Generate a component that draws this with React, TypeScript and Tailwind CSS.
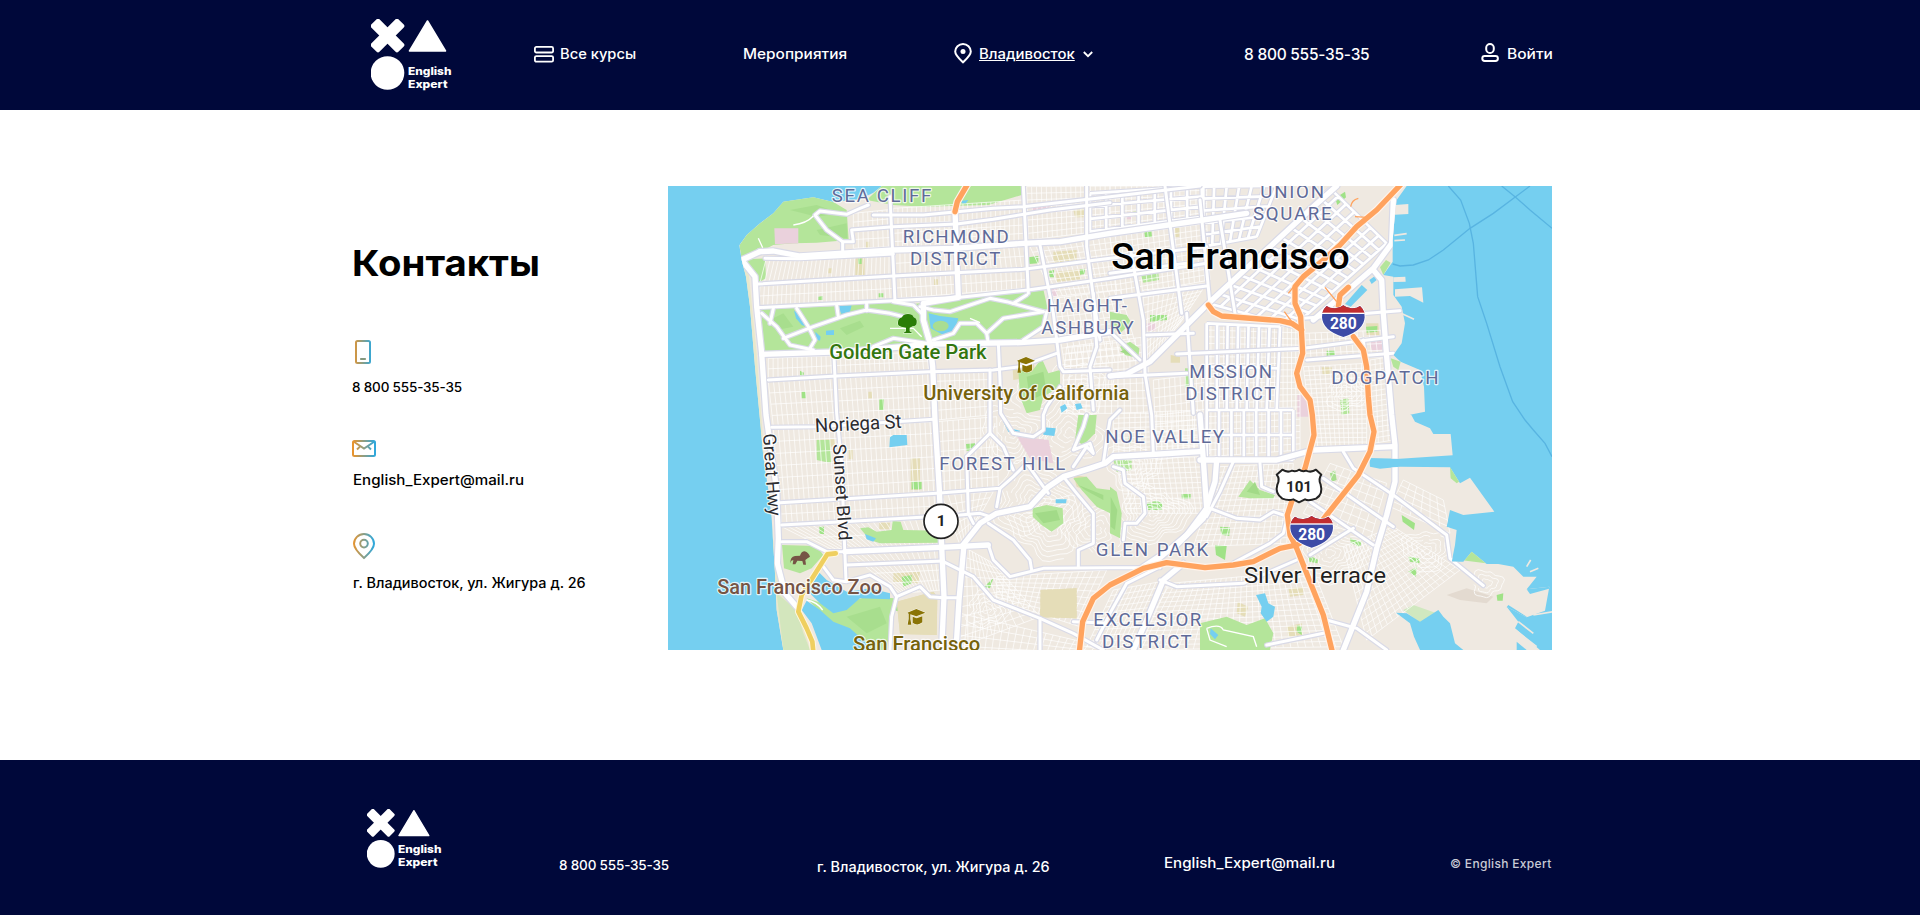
import React from "react";

type Pt = [number, number];

const parse = (s: string): Pt[] =>
  s.trim().split(/\s+/).map((p) => p.split(",").map(Number) as Pt);

/** Fine street mesh stretched over a quadrilateral (clockwise corners). */
function mesh(quad: string, nu: number, nv: number) {
  const [a, b, c, d] = parse(quad);
  const mix = (p: Pt, q: Pt, t: number): Pt => [p[0] + (q[0] - p[0]) * t, p[1] + (q[1] - p[1]) * t];
  let out = "";
  for (let i = 0; i <= nu; i++) {
    const p = mix(a, b, i / nu);
    const q = mix(d, c, i / nu);
    out += `M${p[0].toFixed(1)} ${p[1].toFixed(1)}L${q[0].toFixed(1)} ${q[1].toFixed(1)}`;
  }
  for (let j = 0; j <= nv; j++) {
    const p = mix(a, d, j / nv);
    const q = mix(b, c, j / nv);
    out += `M${p[0].toFixed(1)} ${p[1].toFixed(1)}L${q[0].toFixed(1)} ${q[1].toFixed(1)}`;
  }
  return out;
}

/** Winding hill streets around a summit. */
function rings(cx: number, cy: number, r: number, n: number, seed: number) {
  let out = "";
  for (let k = 1; k <= n; k++) {
    const base = (r * k) / n;
    for (let t = 0; t <= 32; t++) {
      const a = (t / 32) * Math.PI * 1.85 + seed + k * 0.5;
      const rr = base * (1 + 0.16 * Math.sin(a * 3 + seed) + 0.09 * Math.sin(a * 7 + seed * 2));
      out += `${t ? "L" : "M"}${(cx + rr * Math.cos(a)).toFixed(1)} ${(cy + rr * 0.85 * Math.sin(a)).toFixed(1)}`;
    }
  }
  return out;
}

const LAND =
  "665,18 640,38 600,58 520,66 460,52 370,65 340,100 300,130 260,165 238,196 245,240 258,290 270,380 285,560 300,720 310,830 325,930 335,1015 345,1180 350,1290 370,1410 2640,1410 2565,1345 2575,1325 2540,1280 2600,1312 2655,1292 2668,1220 2600,1228 2630,1190 2590,1190 2560,1160 2515,1152 2480,1152 2435,1115 2410,1145 2375,1145 2385,1095 2390,1050 2360,1040 2370,990 2410,1005 2503,995 2430,893 2400,910 2370,862 2220,860 2160,866 2130,860 2128,834 2220,836 2378,826 2372,762 2320,762 2310,745 2265,725 2254,705 2250,704 2295,695 2292,620 2280,570 2222,545 2200,525 2225,490 2235,430 2225,380 2200,345 2200,290 2170,285 2198,245 2198,180 2205,100 2210,60 2240,18";

const PIERS =
  "2205,75 2245,72 2245,102 2205,104 Z 2200,292 2236,290 2237,305 2200,306 Z 2205,328 2286,322 2290,368 2250,348 2205,350 Z";

const HILL_PARKS = [
  "1075,570 1115,575 1145,535 1165,580 1200,570 1200,620 1150,650 1140,690 1100,700 1080,650",
  "600,1045 625,1042 650,1055 695,1050 698,1022 722,1025 730,1050 842,1052 840,1088 660,1090 630,1080",
  "1118,985 1160,975 1208,985 1210,1030 1175,1055 1145,1035 1118,1010",
  "1240,895 1280,890 1310,925 1350,930 1350,1000 1310,980 1265,930",
  "1350,395 1400,405 1415,430 1380,460 1350,440",
  "1380,500 1410,485 1438,505 1435,535 1395,525",
  "1350,920 1370,935 1385,1000 1380,1075 1350,1060",
  "1735,950 1770,900 1800,930 1845,945 1840,955 1770,955",
  "1620,1330 1700,1310 1760,1335 1815,1315 1840,1360 1830,1410 1620,1410",
  "1255,705 1310,705 1305,760 1270,795 1245,780",
];

const PARKS = [
  "338,100 372,62 460,50 520,66 560,90 566,180 470,188 400,190 340,195 300,215 245,235 238,196 262,162 300,130",
  "250,238 315,235 318,295 290,310 272,270",
  "665,18 1090,18 1085,45 985,75 790,80 700,75 620,60",
  "303,388 530,378 700,364 760,372 900,356 1150,328 1165,395 1150,440 1090,485 820,490 560,512 312,520",
  "366,1095 470,1098 490,1125 455,1165 420,1180 372,1165",
  "440,1255 520,1280 620,1250 705,1255 693,1410 630,1410 590,1370 510,1330",
  "2370,862 2395,865 2415,893 2390,910 2372,895",
  "2370,990 2400,1010 2425,1030 2490,1035 2420,1048 2380,1030",
  "2400,1140 2437,1112 2478,1150",
  "2170,285 2160,262 2178,240 2192,248",
  "2192,535 2222,545 2215,570 2200,560",
  "1440,280 1495,275 1497,300 1450,308",
  "470,780 510,780 515,850 470,840",
  "1575,565 1600,565 1602,620 1575,625",
  "2040,660 2065,655 2068,700 2045,705",
  "1360,840 1415,835 1415,870 1370,875",
];

const DARK_PARKS = [
  "540,445 600,422 612,440 560,465",
  "390,90 470,75 540,100 470,110",
  "470,150 560,130 562,175 480,165",
  "560,1310 660,1280 680,1330 620,1360",
  "330,420 370,400 400,440 350,450",
  "2010,880 2025,870 2030,900 2015,905",
];

const DARK_HILLS = [
  "1125,1000 1190,990 1200,1020 1150,1030",
  "1100,590 1150,575 1160,640 1110,660",
  "1255,915 1330,945 1330,960 1275,930",
  "1380,515 1410,500 1425,530",
  "1352,950 1372,990 1365,1050 1352,1040",
  "1760,935 1785,905 1800,945",
];

const WATERS = [
  "530,378 575,376 570,395 545,402",
  "402,392 425,405 440,440 425,435 408,415",
  "806,400 840,408 895,415 885,450 850,465 812,445",
  "498,452 522,450 522,465 498,465",
  "466,455 482,470 480,482 468,478",
  "905,62 925,60 918,70 905,70",
  "690,772 700,765 740,765 742,795 688,802",
  "615,1062 648,1075 640,1085 620,1078",
  "1150,742 1187,745 1183,768 1150,764",
  "1028,722 1050,745 1080,752 1075,765 1045,755",
  "1187,958 1220,958 1218,970 1187,970",
  "1200,680 1215,672 1222,685 1205,698",
  "1245,672 1262,670 1268,685 1250,690",
  "470,1170 500,1200 560,1235 630,1225 690,1240 690,1258 600,1255 560,1290 520,1300 480,1270 445,1235 455,1200",
  "440,1262 480,1290 520,1325 570,1345 620,1390 625,1410 485,1410 455,1330 425,1290",
  "1788,1245 1815,1240 1825,1270 1845,1280 1840,1310 1820,1325 1802,1300 1805,1280",
  "1652,1345 1675,1365 1665,1378 1650,1362",
  "2128,300 2145,288 2150,300 2135,312",
  "2208,1298 2240,1300 2280,1325 2335,1290 2350,1310 2370,1330 2385,1390 2410,1410 2280,1410 2262,1370 2250,1330",
  "2545,1275 2600,1310 2598,1316 2540,1282",
  "2570,1385 2600,1410 2570,1410",
  "2600,1228 2668,1215 2672,1225 2610,1242",
];

const TANS = [
  "586,232 614,232 614,285 586,285", "1180,215 1250,210 1250,240 1180,248", "1188,275 1262,268 1262,298 1190,305",
  "1058,565 1120,545 1130,590 1060,600", "710,1265 820,1235 832,1250 830,1365 720,1362", "700,1180 780,1175 775,1210 700,1205",
  "1142,1230 1250,1225 1250,1315 1140,1312", "1733,1265 1765,1280 1755,1310 1730,1300", "2118,430 2155,430 2158,465 2120,465",
  "752,835 780,835 780,930 752,930", "470,778 525,778 525,800 470,800", "1880,1340 1925,1330 1928,1365 1885,1370",
  "1985,562 2015,562 2018,580 1988,584", "1532,525 1560,530 1560,548 1532,548", "1240,885 1280,890 1275,930 1250,920",
  "618,185 628,185 628,205 618,205", "505,265 515,265 515,280 505,280", "822,298 834,298 834,315 822,315",
  "566,808 578,808 578,838 566,838", "625,635 636,635 636,655 625,655", "1240,90 1278,85 1270,112 1245,112",
  "1545,145 1560,142 1558,170 1545,172", "1885,1225 1930,1220 1930,1245 1890,1250", "658,1028 690,1028 688,1048 658,1048",
];

const GREENS = [
  "594,235 605,235 605,252 594,252", "475,350 488,348 488,360 475,360", "656,340 670,340 670,352 656,352", "420,572 432,578 430,588 420,585",
  "425,635 438,635 438,655 425,655", "658,658 672,658 672,690 658,690", "1105,232 1135,228 1135,250 1108,252", "1168,272 1182,270 1182,292 1168,292",
  "1260,268 1275,266 1275,282 1260,284", "478,1040 492,1040 492,1062 478,1062", "918,792 945,790 946,812 920,812", "755,905 785,905 785,928 755,928",
  "1452,150 1474,150 1476,172 1455,172", "1470,405 1520,405 1522,420 1470,425", "2000,512 2025,512 2025,525 2000,528", "1852,502 1876,502 1876,514 1852,516",
  "2118,440 2152,438 2152,455 2120,458", "1680,1040 1710,1042 1708,1068 1684,1064", "1665,1095 1700,1098 1695,1140 1668,1125", "1565,942 1592,942 1592,956 1565,956",
  "2225,1005 2265,1030 2262,1050 2228,1025", "2070,1075 2105,1085 2100,1100 2072,1088", "2245,1130 2280,1135 2278,1150 2250,1145", "2245,1175 2270,1160 2268,1190",
  "2510,1245 2530,1240 2528,1262 2512,1262", "1460,970 1490,962 1508,970 1505,990 1465,990", "700,1275 740,1290 738,1300 700,1290", "725,1190 755,1185 755,1210 730,1220",
  "1912,1335 1926,1340 1925,1365 1910,1355", "1945,1125 1975,1140 1972,1150 1948,1145", "972,1220 1000,1195 990,1225", "1405,770 1412,770 1412,790 1405,790",
  "2025,55 2055,35 2058,52 2032,75", "1420,95 1438,95 1438,105 1420,105",
];

const PINKS = [
  "343,145 415,145 415,190 345,193", "1072,770 1165,780 1180,850 1110,835", "2130,482 2170,482 2172,510 2135,512", "1912,645 1945,645 1945,710 1912,710",
  "1170,320 1190,320 1190,350 1170,350", "1460,430 1488,430 1488,452 1460,452", "1400,98 1414,98 1414,118 1400,118", "1115,80 1170,76 1165,90 1115,95",
];

const FINE = [
  mesh("700,85 1090,60 1090,185 700,210", 28, 5),
  mesh("580,100 695,88 700,200 580,205", 8, 4),
  mesh("318,238 700,218 700,285 300,308", 30, 1),
  mesh("300,318 700,293 704,357 296,378", 30, 2),
  mesh("705,215 1090,195 1100,262 705,285", 26, 2),
  mesh("705,293 1098,273 1100,325 710,355", 26, 2),
  mesh("325,535 815,515 820,570 325,598", 34, 2),
  mesh("325,605 818,580 825,718 340,740", 32, 4),
  mesh("340,748 825,725 836,935 358,965", 32, 6),
  mesh("360,972 838,945 842,1010 365,1032", 30, 2),
  mesh("365,1040 840,1015 845,1095 500,1108", 26, 2),
  mesh("825,575 985,572 990,705 830,720", 11, 5),
  mesh("830,725 1010,710 1015,920 838,935", 11, 7),
  mesh("845,945 1000,935 950,1025 900,1095", 8, 5),
  mesh("565,1120 840,1110 845,1230 720,1240", 16, 4),
  mesh("1100,20 1350,18 1350,150 1105,180", 17, 8),
  mesh("1110,200 1350,170 1370,330 1180,350", 14, 9),
  mesh("1180,355 1380,330 1440,540 1215,560", 12, 11),
  mesh("1350,18 1640,18 1640,110 1350,155", 18, 7),
  mesh("1350,170 1640,130 1650,300 1370,350", 18, 10),
  mesh("1450,330 1640,310 1560,430 1450,560", 12, 10),
  mesh("1220,500 1460,470 1470,700 1200,700", 14, 10),
  mesh("1480,600 1640,580 1650,820 1490,840", 10, 9),
  mesh("1360,700 1620,690 1620,810 1360,820", 16, 8),
  mesh("1370,840 1620,830 1640,1000 1400,1000", 15, 11),
  mesh("1640,430 1920,440 1920,810 1640,830", 22, 20),
  mesh("1930,560 2120,550 2120,800 1960,800", 12, 18),
  mesh("2130,540 2190,530 2200,780 2140,790", 4, 16),
  mesh("1930,460 2180,450 2190,530 1935,540", 14, 4),
  mesh("1680,860 1900,850 1880,1090 1600,1100", 15, 14),
  mesh("1530,1210 1960,1170 2050,1400 1420,1410", 28, 14),
  mesh("910,1100 1000,1150 1140,1310 900,1400", 10, 10),
  mesh("900,1300 1330,1400 1300,1430 890,1430", 20, 4),
  mesh("1010,1190 1340,1170 1260,1340 1010,1260", 16, 8),
  mesh("1360,1230 1530,1200 1440,1400 1280,1400", 12, 10),
  mesh("2050,1100 2200,1040 2400,1170 2120,1380", 18, 14),
  mesh("2010,850 2180,910 2130,1080 1930,1000", 8, 7),
  mesh("2230,900 2350,960 2370,1060 2190,980", 6, 5),
];

const HILLS = [
  [1120, 960, 120, 8, 1], [1060, 760, 95, 6, 2.2], [1230, 760, 100, 6, 0.4], [1270, 620, 90, 6, 3], [1170, 1040, 110, 7, 4], [1480, 1000, 100, 8, 1.6],
  [1420, 860, 80, 6, 2.8], [1310, 1050, 90, 6, 5], [980, 1290, 60, 5, 0.8], [2010, 1120, 100, 7, 2], [2300, 1110, 70, 5, 3.4], [2060, 640, 60, 5, 1],
  [1120, 640, 60, 4, 0.2], [2480, 1210, 45, 3, 2],
].map(([x, y, r, n, s]) => rings(x, y, r, n, s));

const BLOCKS = [
  mesh("1625,20 1850,18 1790,170 1630,200", 6, 5),
  mesh("1645,370 2010,25 2180,190 1900,440", 12, 7),
  mesh("1640,430 1860,440 1850,690 1640,690", 7, 2),
  mesh("1640,690 1900,690 1900,840 1640,840", 7, 2),
  mesh("1290,40 1630,18 1630,110 1290,155", 7, 3),
];

const MAIN = [
  "300,215 245,240 285,290 290,380 305,520 318,705 350,930 355,1075 352,1150 375,1240 410,1280",
  "300,215 340,213 420,228 700,210 880,205 1090,190 1200,185 1350,160 1630,120 1760,100",
  "305,523 560,515 820,492 1080,488 1200,480 1350,455",
  "885,95 895,352 790,370 790,420 810,490 818,560 825,720 838,930 845,1100 852,1250 845,1410",
  "555,1115 840,1102 985,1095",
  "912,1095 897,1260 888,1410",
  "905,1100 960,1030 1010,1000 1110,980 1165,920 1210,890 1290,865 1335,850 1360,830 1500,822 1620,815",
  "1350,588 1400,582 1470,545 1640,375 1960,80 2030,18",
  "2140,270 2165,300 2170,400 2180,530 2195,705 2205,795 2205,905 2180,1005 2150,1105 2120,1235 2050,1410",
  "2200,60 2195,190 2140,265 1960,420",
  "1620,705 1630,840 1640,985 1580,1065 1480,1150",
  "1670,840 1665,905 1630,1015 1550,1095 1450,1160",
  "1620,840 1850,840 1960,810 2200,800",
  "1420,1410 1460,1320 1510,1200 1570,1150",
];

const ROADS = [
  "640,105 790,105 1000,85 1090,80 1350,50 1620,18",
  "548,215 548,185 580,185 575,150 700,140 890,132 1000,118 1170,90 1350,68",
  "548,185 500,150 465,105 480,93 560,103 600,85 625,75",
  "315,235 420,236 700,222",
  "295,312 700,288 1090,268 1350,235 1640,200",
  "290,383 700,362 900,352 1105,330 1350,295 1640,250",
  "690,50 705,365", "1090,18 1105,340", "1140,195 1180,400 1200,560 1210,575 1350,570", "1280,18 1280,200 1300,350 1320,480",
  "305,400 350,440 390,495 460,510", "530,375 535,410", "340,385 330,430", "370,475 460,440 560,405 620,390 690,400 730,410",
  "410,385 445,440 465,480 450,505", "620,370 620,392", "700,365 760,375 785,400",
  "780,380 820,390 870,395 930,375 990,355 1040,365 1150,395", "820,480 880,460 900,430 950,430 980,460 1030,415 1090,405 1150,395",
  "980,460 985,490", "640,500 700,475 800,490", "1090,480 1150,440 1160,395", "1100,345 1060,370",
  "325,600 530,588 810,575 1000,570 1080,560 1190,520", "335,742 480,740 820,718",
  "360,968 830,940 1020,925 1060,890 1100,850", "365,1035 550,1025 900,1005 960,1000 990,1010",
  "365,1085 440,1085 500,1115 560,1115", "560,1155 850,1143", "522,530 530,700 545,850 553,1080 558,1200",
  "920,830 925,1000 940,1030", "990,570 990,760 920,830", "1015,490 1020,600 1022,700 1060,760 1120,770 1150,750 1150,705 1160,680 1200,620",
  "850,1145 940,1190 1000,1260 1140,1315 1240,1360 1330,1410", "985,1095 1000,1140 1050,1190 1150,1165 1350,1163 1500,1163",
  "985,1030 1060,1080 1110,1140 1115,1170", "1140,1315 1140,1410", "490,1160 520,1200 560,1205 630,1185 690,1220 710,1250 695,1310 690,1410",
  "710,1250 780,1220 810,1250 850,1253 895,1253", "1210,890 1250,940 1300,1000 1300,1090 1255,1110 1255,1160",
  "1020,925 1010,980", "990,760 1030,800 1060,870", "1100,850 1150,920 1165,940", "1240,860 1280,800 1300,820 1290,790 1240,810 1270,740 1280,705",
  "1330,850 1340,780 1350,720 1380,690", "1350,455 1440,540", "1300,340 1310,500 1290,560 1300,690",
  "1240,1325 1350,1330", "1310,1380 1350,1300 1400,1210 1500,1160",
  "1410,200 1450,420 1455,580 1475,705 1480,820", "1515,18 1565,400", "1620,60 1650,375", "1680,120 1725,400",
  "1460,465 1600,460", "1350,355 1640,318", "1350,280 1580,250", "1550,522 1930,505 2200,470", "1940,540 2200,520", "1350,590 1580,580",
  "1930,415 2220,392", "2110,480 2115,520", "1580,400 1600,700",
  "1650,985 1730,1015 1800,1020 1840,995 1870,1005", "1990,895 2200,1040", "1950,965 2140,1095",
  "2050,815 2080,865 2200,945 2360,1065 2370,1135 2470,1217", "1950,1125 2080,1045",
  "1500,1200 1550,1220 1750,1210 1910,1140", "1820,1395 1990,1360", "2000,1320 2090,1345 2180,1410",
  "1720,845 1680,935 1640,1010", "1800,850 1805,920 1840,935", "1360,860 1390,870 1395,910 1450,950 1455,1000 1430,1030 1395,1030 1390,1080",
  "1880,1020 1870,1060 1830,1090 1700,1160",
];

const FREEWAYS = [
  "2222,14 2150,90 2090,140 2040,195 1990,240 1930,290 1905,320 1905,370 1922,410 1928,520 1910,580 1920,620 1950,660 1957,705 1962,765 1935,865 1895,965 1882,1005 1890,1065 1910,1105 1950,1205 1990,1305 2017,1415",
  "1645,375 1660,395 1685,408 1860,422 1895,430 1925,450",
  "2065,322 2040,345 2035,380",
  "2080,470 2110,510 2120,560 2125,650 2130,705 2142,755 2130,815 2095,885 2000,1005 1945,1075 1910,1095 1860,1105 1780,1145 1720,1155 1635,1163 1520,1148 1450,1165 1350,1215 1300,1255 1268,1325 1258,1415",
  "922,14 892,65 885,95",
];

const YELLOW = "527,1120 502,1123 450,1205 425,1245 415,1295 440,1345 457,1385 460,1415";

const Line = ({ pts, w, c }: { pts: string; w: number; c: string }) => (
  <polyline points={pts} fill="none" stroke={c} strokeWidth={w} strokeLinecap="round" strokeLinejoin="round" />
);

const Polys = ({ list, fill }: { list: string[]; fill: string }) => (
  <g fill={fill}>{list.map((p) => <polygon key={p} points={p} />)}</g>
);

type LabelProps = { x: number; y: number; w: number; size?: number; fill?: string; weight?: number; turn?: number; children: string };

const Label = ({ x, y, w, size = 56, fill = "#5f6a98", weight = 400, turn = 0, children }: LabelProps) => (
  <text
    x={x}
    y={y}
    fontSize={size}
    fontWeight={weight}
    fill={fill}
    textLength={w}
    lengthAdjust={size === 56 ? "spacing" : "spacingAndGlyphs"}
    transform={turn ? `rotate(${turn} ${x} ${y})` : undefined}
    stroke="#ffffff"
    strokeOpacity={0.8}
    strokeWidth={7}
    strokeLinejoin="round"
    paintOrder="stroke"
  >
    {children}
  </text>
);

const Interstate = ({ x, y }: { x: number; y: number }) => (
  <g transform={`translate(${x} ${y})`}>
    <path d="M14 0 Q24 8 40 7 Q54 6 64 -2 Q74 6 88 7 Q104 8 114 0 Q128 12 128 34 Q126 74 64 93 Q2 74 0 34 Q0 12 14 0Z" fill="#3d4ba6" stroke="#fff" strokeWidth="5" paintOrder="stroke" />
    <path d="M14 0 Q24 8 40 7 Q54 6 64 -2 Q74 6 88 7 Q104 8 114 0 Q126 10 128 22 L0 22 Q2 10 14 0Z" fill="#c22d2f" />
    <rect x="0" y="20" width="128" height="4" fill="#fff" />
    <text x="24" y="69" fontSize="47" fontWeight="700" fill="#fff" textLength="80" lengthAdjust="spacing">280</text>
  </g>
);

const Cap = ({ x, y }: { x: number; y: number }) => (
  <g transform={`translate(${x} ${y})`} fill="#8a7406" stroke="#fff" strokeOpacity="0.7" strokeWidth="3" paintOrder="stroke">
    <path d="M27 0 L54 11 L27 22 L9 16 L9 30 L12 47 L1 47 L4 30 L4 14 L0 11Z" />
    <path d="M16 23 L28 28 L45 22 L45 40 Q30 52 16 41Z" />
  </g>
);

function CityMap() {
  return (
    <svg viewBox="24 18 2652 1392" className="block h-[464px] w-[884px] shrink-0" fontFamily='Roboto, "Liberation Sans", sans-serif'>
      <defs>
        <clipPath id="land"><polygon points={LAND} /></clipPath>
      </defs>
      <rect x="24" y="18" width="2652" height="1392" fill="#75cff0" />
      <g fill="none" stroke="#58b4e1" strokeWidth="4">
        <polyline points="2365,18 2402,60 2428,130 2440,190 2453,350 2480,430 2520,560 2558,665 2595,720 2620,750 2655,790 2676,830" />
        <polyline points="2525,18 2565,50 2610,90 2676,145" />
        <polyline points="2198,252 2220,258 2260,255 2305,240 2350,210 2430,145 2500,100 2610,18" />
      </g>
      <polygon points={LAND} fill="#efe9e1" />
      <path d={PIERS.split(" Z").map((s) => (s.trim() ? `M${s.trim()}Z` : "")).join("")} fill="#efe9e1" />
      <path d="M2203 166L2240 161M2203 182L2235 180M2220 398L2262 418M2600 1160L2612 1140M2610 1175L2635 1165M2620 1305L2680 1295M2575 1325L2620 1360M2560 1345L2630 1400" stroke="#efe9e1" strokeWidth="5" />
      <g clipPath="url(#land)">
        <polygon points="245,240 262,238 290,520 320,930 345,1120 370,1250 420,1300 450,1410 340,1410 330,1050 285,600" fill="#e9e8cb" />
        <polygon points="350,1240 410,1290 430,1360 450,1410 370,1410" fill="#d3e6bd" />
        <Polys list={TANS} fill="#e5ddb8" />
        <Polys list={PINKS} fill="#ead1dc" />
        <Polys list={PARKS} fill="#b4e59a" />
        <Polys list={[PINKS[0]]} fill="#ead1dc" />
        <Polys list={DARK_PARKS} fill="#a8de8e" />
        <Polys list={GREENS} fill="#a0e287" />
        <polygon points="2230,1290 2260,1275 2330,1300 2300,1345 2270,1320" fill="#d0e8bf" />
        <polygon points="2360,1245 2420,1225 2500,1250 2480,1270 2400,1260" fill="#e3dad0" />
        <path d={FINE.join("")} fill="none" stroke="#ffffff" strokeWidth="2.6" opacity="0.8" />
        <path d={HILLS.join("")} fill="none" stroke="#ffffff" strokeWidth="3" opacity="0.75" />
        <Polys list={HILL_PARKS} fill="#b4e59a" />
        <Polys list={DARK_HILLS} fill="#a2da88" />
        <Polys list={[PINKS[1]]} fill="#ead1dc" />
        <Polys list={[TANS[4], TANS[6]]} fill="#e5ddb8" />
        <Polys list={WATERS} fill="#75cff0" />
        <ellipse cx="842" cy="438" rx="24" ry="16" fill="#a9dd91" />
        <path d={BLOCKS.join("")} fill="none" stroke="#d9dae7" strokeWidth="14" />
        <path d={BLOCKS.join("")} fill="none" stroke="#ffffff" strokeWidth="8" />
        {ROADS.map((p) => <Line key={p} pts={p} w={16} c="#d9dae7" />)}
        {MAIN.map((p) => <Line key={p} pts={p} w={23} c="#d9dae7" />)}
        {ROADS.map((p) => <Line key={p} pts={p} w={9} c="#ffffff" />)}
        {MAIN.map((p) => <Line key={p} pts={p} w={16} c="#ffffff" />)}
        <path d="M440 1260Q470 1265 488 1290M400 135Q440 130 460 108M295 175L308 203M690 445L760 445L785 470M930 415L960 428M1640 1345Q1680 1330 1690 1350L1780 1370L1790 1400M1640 1345L1650 1380L1700 1400" fill="none" stroke="#fff" strokeWidth="4" />
        <polygon points="2055,372 2105,315 2122,330 2072,380" fill="#75cff0" />
      </g>
      {FREEWAYS.map((p) => <Line key={p} pts={p} w={23} c="#fff3ea" />)}
      {FREEWAYS.map((p) => <Line key={p} pts={p} w={16} c="#ffa35e" />)}
      <path d="M1995 322L2030 365M1873 395L1895 425M1885 340L1905 315M2072 80Q2075 60 2095 55M2085 110L2120 112" fill="none" stroke="#ffa35e" strokeWidth="4" />
      <Line pts={YELLOW} w={20} c="#fff7df" />
      <Line pts={YELLOW} w={14} c="#efcf5f" />

      <Label x={515} y={67} w={299}>SEA CLIFF</Label>
      <Label x={728} y={189} w={318}>RICHMOND</Label>
      <Label x={750} y={255} w={271}>DISTRICT</Label>
      <Label x={1160} y={396} w={241}>HAIGHT-</Label>
      <Label x={1144} y={462} w={277}>ASHBURY</Label>
      <Label x={1801} y={54} w={191}>UNION</Label>
      <Label x={1779} y={121} w={236}>SQUARE</Label>
      <Label x={1588} y={593} w={248}>MISSION</Label>
      <Label x={1576} y={660} w={270}>DISTRICT</Label>
      <Label x={2014} y={612} w={322}>DOGPATCH</Label>
      <Label x={1336} y={788} w={356}>NOE VALLEY</Label>
      <Label x={838} y={871} w={378}>FOREST HILL</Label>
      <Label x={1307} y={1127} w={338}>GLEN PARK</Label>
      <Label x={1300} y={1338} w={324}>EXCELSIOR</Label>
      <Label x={1326} y={1404} w={269}>DISTRICT</Label>
      <Label x={508} y={538} w={472} size={59} fill="#33760f" weight={500}>Golden Gate Park</Label>
      <Label x={790} y={660} w={618} size={59} fill="#76620c" weight={500}>University of California</Label>
      <Label x={172} y={1241} w={494} size={59} fill="#765445" weight={500}>San Francisco Zoo</Label>
      <Label x={579} y={1414} w={382} size={59} fill="#76620c" weight={500}>San Francisco</Label>
      <Label x={1752} y={1208} w={426} size={67} fill="#1f1f22">Silver Terrace</Label>
      <Label x={466} y={757} w={260} size={58} fill="#2c2c30" turn={-3}>Noriega St</Label>
      <Label x={309} y={762} w={247} size={54} fill="#2c2c30" turn={86}>Great Hwy</Label>
      <Label x={519} y={793} w={290} size={54} fill="#2c2c30" turn={86.5}>Sunset Blvd</Label>
      <Label x={1354} y={268} w={715} size={111} fill="#000000" weight={500}>San Francisco</Label>

      <path d="M726 412Q730 402 744 402Q758 402 761 412Q772 416 770 428Q770 438 758 439L749 443L749 454L757 459L730 459L738 454L738 443L724 440Q712 438 714 427Q714 415 726 412Z" fill="#2a7d07" stroke="#fff" strokeOpacity="0.7" strokeWidth="3" paintOrder="stroke" />
      <path d="M391 1150Q390 1130 405 1128L420 1127Q424 1114 434 1114Q446 1118 450 1130L444 1134L436 1140L438 1154L430 1154L427 1143L412 1142L406 1153L398 1153L400 1140L394 1142Z" fill="#765445" />
      <Cap x={1071} y={531} />
      <Cap x={742} y={1287} />
      <Interstate x={1986} y={378} />
      <Interstate x={1891} y={1010} />
      <circle cx="843" cy="1024" r="51" fill="#fff" stroke="#222" strokeWidth="5" />
      <text x="830" y="1039" fontSize="46" fontWeight="700" fill="#222">1</text>
      <path d="M1867 869Q1882 879 1896 872Q1908 876 1917 869Q1927 876 1938 872Q1954 879 1968 869L1984 884Q1974 897 1982 914Q1990 942 1968 956Q1945 964 1935 958L1917 967L1900 958Q1884 963 1867 956Q1844 940 1852 914Q1861 897 1850 884Z" fill="#fff" stroke="#222" strokeWidth="6" strokeLinejoin="round" />
      <text x="1878" y="937" fontSize="46" fontWeight="700" fill="#222" textLength="78" lengthAdjust="spacingAndGlyphs">101</text>
    </svg>
  );
}

function Logo({ small = false }: { small?: boolean }) {
  const k = small ? 0.83 : 1;
  return (
    <svg width="84" height="72" viewBox="0 0 84 72" className="block shrink-0" fill="#fff" fontFamily="Inter, sans-serif">
      <g transform={`scale(${k})`}>
        <g transform="rotate(45 16.5 16.5)">
          <rect x="-2.7" y="10.7" width="38.4" height="11.6" rx="2" />
          <rect x="10.7" y="-2.7" width="11.6" height="38.4" rx="2" />
        </g>
        <path d="M56.5 2L74.5 32L38.5 32Z" stroke="#fff" strokeWidth="1.6" strokeLinejoin="round" />
        <circle cx="16.5" cy="54" r="16.8" />
      </g>
      <text x={small ? 31 : 37} y={small ? 43.5 : 56} fontSize="11" fontWeight="800" textLength="43.5" lengthAdjust="spacingAndGlyphs">English</text>
      <text x={small ? 31 : 37} y={small ? 56.5 : 69} fontSize="11" fontWeight="800" textLength="39.5" lengthAdjust="spacingAndGlyphs">Expert</text>
    </svg>
  );
}

const Gradient = ({ id, to }: { id: string; to: number }) => (
  <linearGradient id={id} x1="0" y1="0" x2={to} y2="0" gradientUnits="userSpaceOnUse">
    <stop offset="0.05" stopColor="#e8942e" />
    <stop offset="0.95" stopColor="#2fa8dc" />
  </linearGradient>
);

export default function App() {
  return (
    <div className="flex h-[915px] w-[1920px] flex-col overflow-hidden bg-white font-[Inter,sans-serif] text-sm font-medium whitespace-nowrap text-black">
      <header className="h-[110px] shrink-0 bg-[#00083a] text-white">
        <div className="mx-auto flex h-full w-[1200px] items-center pl-[11px]">
          <Logo />
          <a className="ml-[79px] flex w-[209px] shrink-0 items-center gap-1.5 pb-0.5">
            <svg width="20" height="17" viewBox="0 0 20 17" className="mt-px" fill="none" stroke="#fff" strokeWidth="1.8">
              <rect x="0.9" y="0.9" width="18.2" height="5.6" rx="1.5" />
              <rect x="0.9" y="10.1" width="18.2" height="5.6" rx="1.5" />
            </svg>
            <span className="origin-left scale-x-[1.05]">Все курсы</span>
          </a>
          <a className="w-[211px] shrink-0 pb-0.5"><span className="inline-block origin-left scale-x-[1.1]">Мероприятия</span></a>
          <a className="flex w-[290px] shrink-0 items-center pb-[3px]">
            <svg width="18" height="21" viewBox="0 0 18 21" fill="none" stroke="#fff" strokeWidth="2">
              <path d="M9 19.3C5 15.6 1.2 12.4 1.2 8.6A7.8 7.6 0 0 1 16.8 8.6C16.8 12.4 13 15.6 9 19.3Z" />
              <circle cx="9" cy="8.6" r="2.5" fill="#fff" stroke="none" />
            </svg>
            <span className="ml-[7px] origin-left scale-x-[1.065] underline decoration-1 underline-offset-1">Владивосток</span>
            <svg className="mt-0.5 ml-3.5" width="10" height="7" viewBox="0 0 10 7" fill="none" stroke="#fff" strokeWidth="1.8"><path d="M0.8 1L5 5.2L9.2 1" /></svg>
          </a>
          <a className="w-[238px] shrink-0 text-[15.5px] tracking-[-0.25px]">8 800 555-35-35</a>
          <a className="flex items-center gap-2 pb-0.5">
            <svg width="18" height="19" viewBox="0 0 18 19" className="mb-1 -ml-px" fill="none" stroke="#fff" strokeWidth="2">
              <rect x="5.2" y="1" width="7.6" height="9" rx="3.8" />
              <rect x="1.3" y="13" width="15.6" height="5" rx="2.4" />
            </svg>
            <span className="origin-left scale-x-[1.11]">Войти</span>
          </a>
        </div>
      </header>

      <main className="mx-auto flex h-[650px] w-[1200px] shrink-0 pt-[76px]">
        <section className="-ml-2 w-[316px] shrink-0 pt-[57px]">
          <h1 className="w-fit origin-left scale-x-[1.065] text-4xl font-bold">Контакты</h1>
          <svg width="24" height="24" viewBox="0 0 24 24" className="mt-[57px] block" fill="none" stroke="url(#g-phone)" strokeWidth="2">
            <defs><Gradient id="g-phone" to={21} /></defs>
            <rect x="4" y="1" width="14" height="22" rx="1.5" />
            <path d="M8.2 19L13.8 19.01" strokeWidth="1.8" stroke="#85987f" />
          </svg>
          <p className="mt-[13px] text-[13.5px] leading-5 tracking-[-0.17px]">8 800 555-35-35</p>
          <svg width="24" height="17" viewBox="0 0 24 17" className="mt-[43px] block" fill="none" stroke="url(#g-mail)" strokeWidth="2">
            <defs><Gradient id="g-mail" to={24} /></defs>
            <rect x="1" y="1" width="22" height="15" rx="1.5" />
            <path d="M1.5 1.5L12 8.6L22.5 1.5M5 9.5L8.2 6.4M19 9.5L15.8 6.4" />
          </svg>
          <p className="mt-[13px] ml-px w-fit origin-left scale-x-[1.08] leading-5">English_Expert@mail.ru</p>
          <svg width="23" height="27" viewBox="0 0 23 27" className="mt-[43px] block" fill="none" stroke="url(#g-pin)" strokeWidth="2">
            <defs><Gradient id="g-pin" to={23} /></defs>
            <path d="M12 25C6.6 20.2 2 15.8 2 10.8A10 9.8 0 0 1 22 10.8C22 15.8 17.4 20.2 12 25Z" />
            <circle cx="12" cy="10.6" r="3.8" />
          </svg>
          <p className="mt-[13px] ml-px w-fit origin-left scale-x-[1.03] leading-5">г. Владивосток, ул. Жигура д. 26</p>
        </section>
        <CityMap />
      </main>

      <footer className="flex-1 bg-[#00083a] text-white">
        <div className="mx-auto flex w-[1200px] items-start pt-[49px] pl-[7px]">
          <Logo small />
          <p className="mt-[46px] ml-[108px] w-[258px] shrink-0 text-[13.5px] leading-5 tracking-[-0.17px]">8 800 555-35-35</p>
          <p className="mt-12 w-[347px] shrink-0"><span className="inline-block origin-left scale-x-[1.03]">г. Владивосток, ул. Жигура д. 26</span></p>
          <p className="mt-11 w-[286px] shrink-0"><span className="inline-block origin-left scale-x-[1.08]">English_Expert@mail.ru</span></p>
          <p className="mt-[47px] text-xs tracking-[0.33px] text-[#c9cbd6]">© English Expert</p>
        </div>
      </footer>
    </div>
  );
}
